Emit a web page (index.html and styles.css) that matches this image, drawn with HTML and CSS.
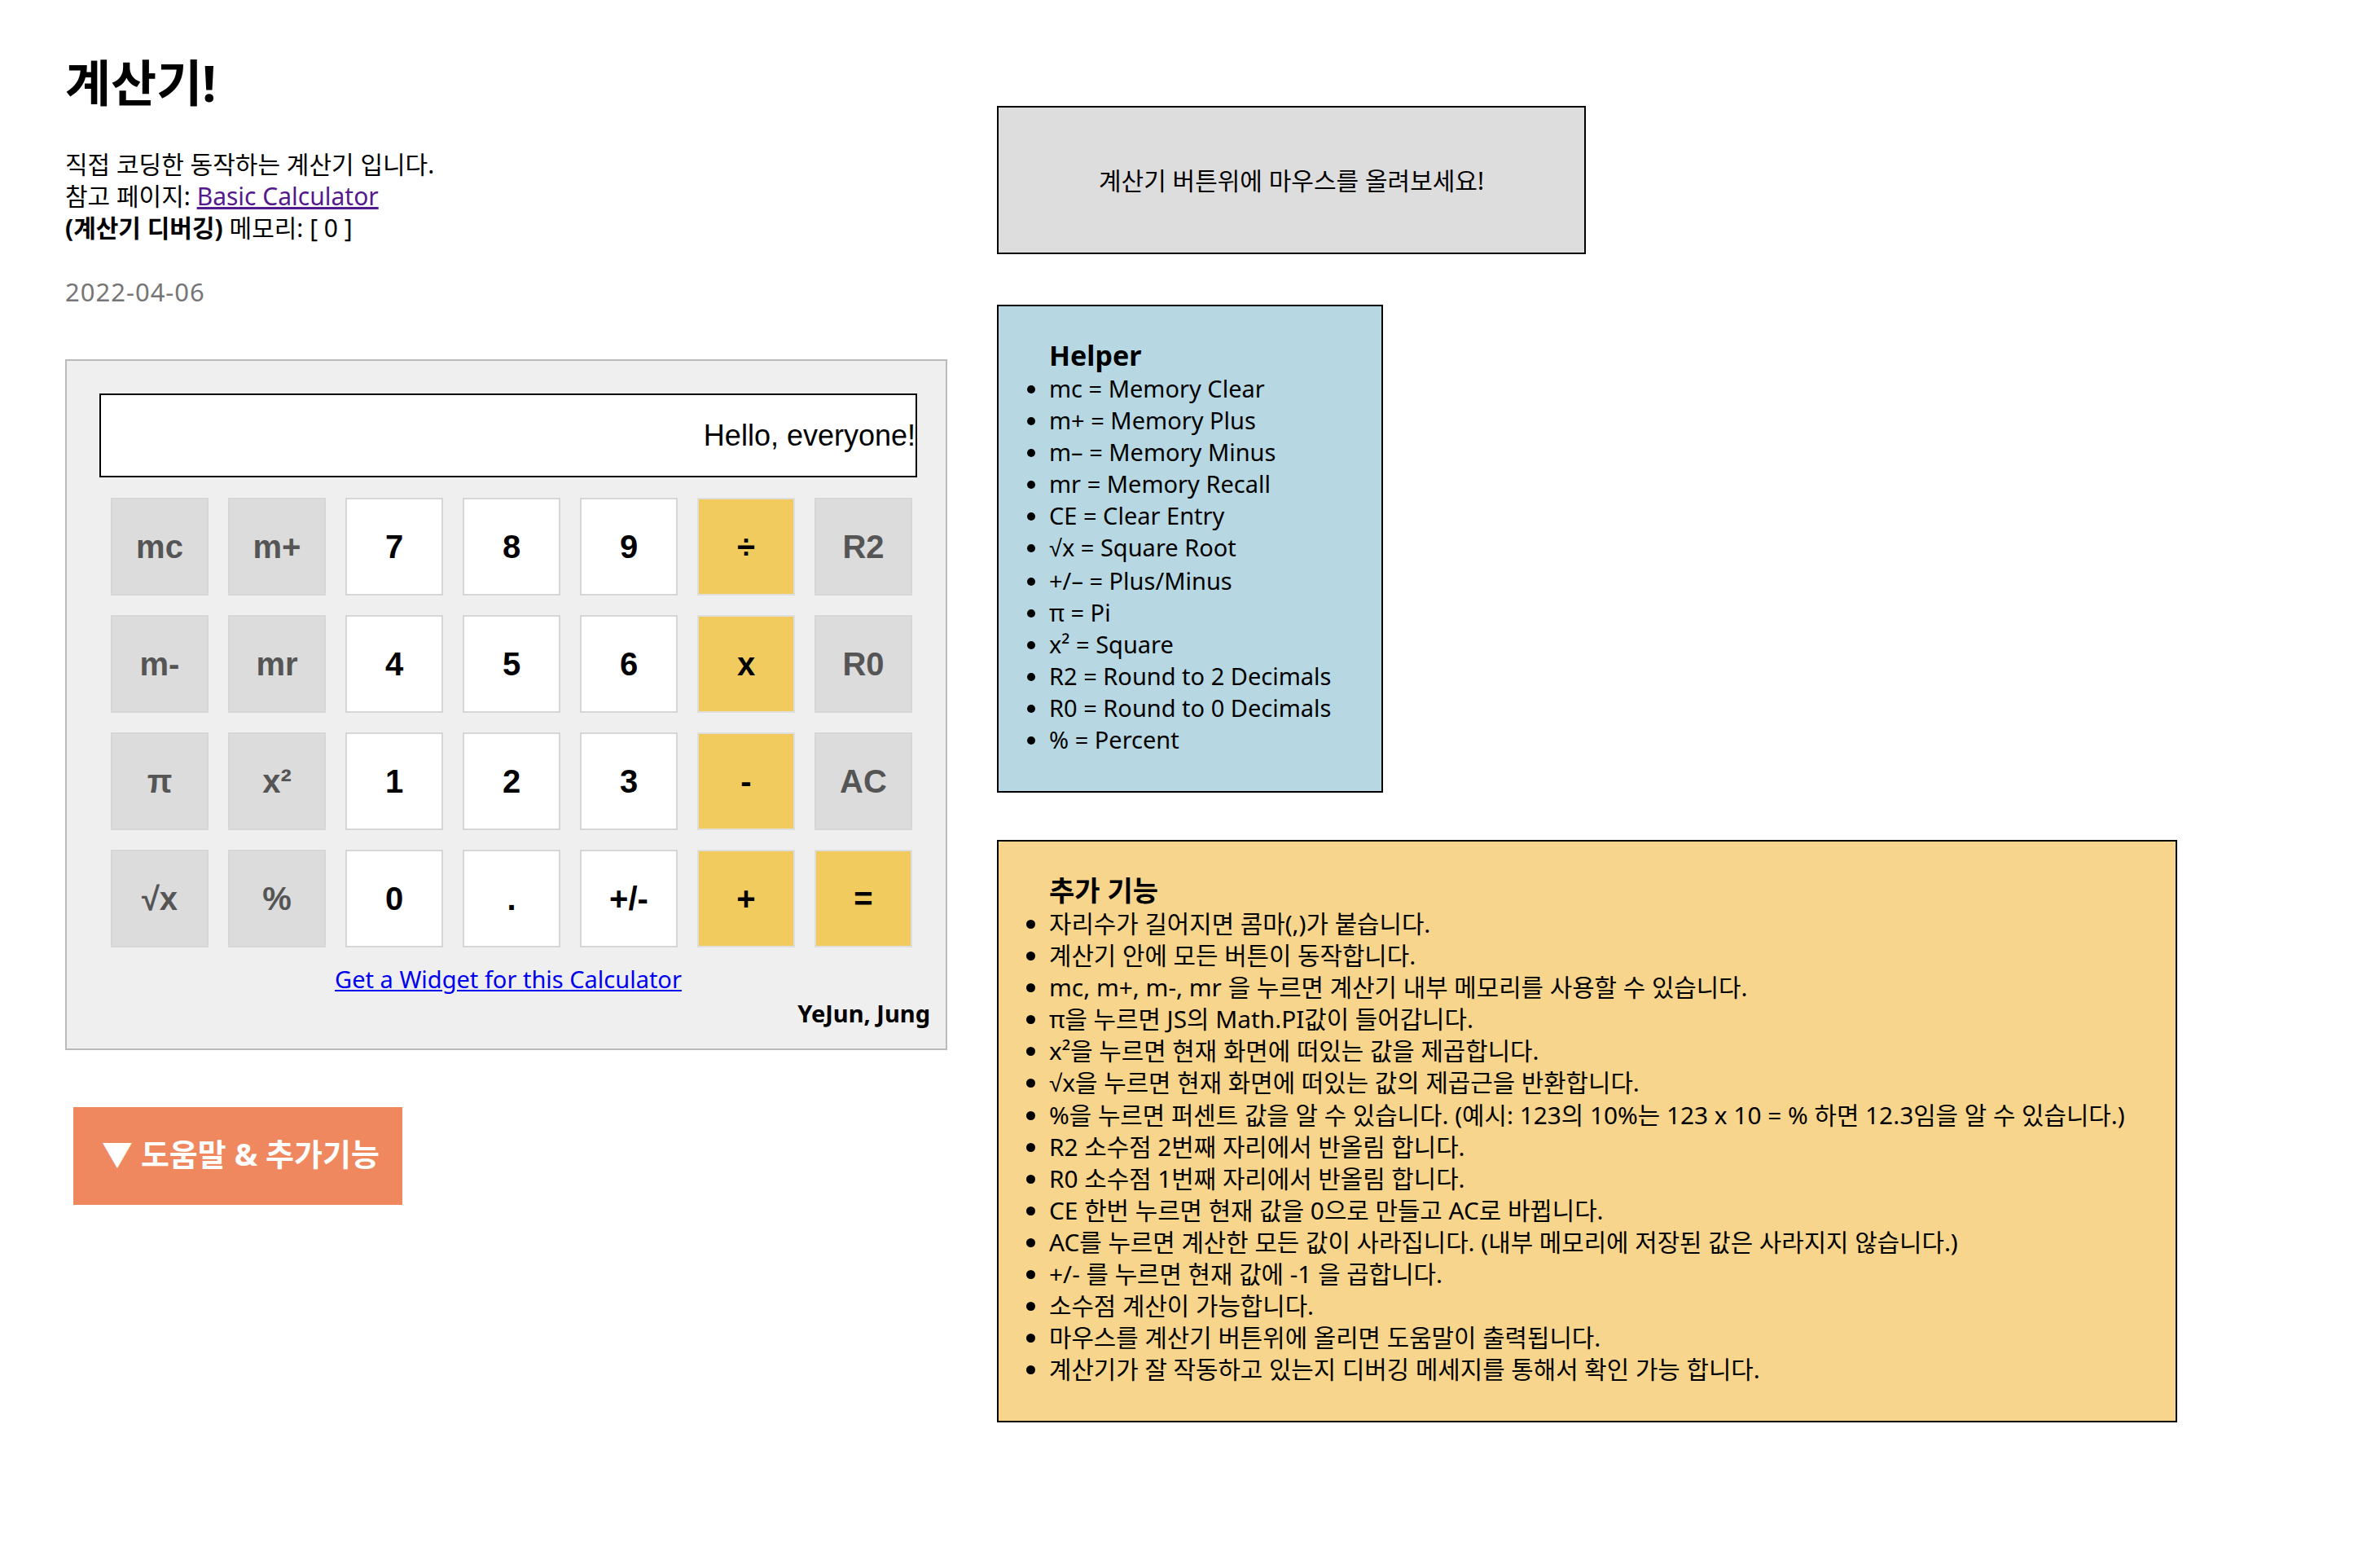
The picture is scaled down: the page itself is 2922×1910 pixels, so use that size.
FILE: index.html
```html
<!DOCTYPE html>
<html lang="ko">
<head>
<meta charset="utf-8">
<title>계산기!</title>
<link rel="stylesheet" href="styles.css">
</head>
<body>
<div class="page">
  <div class="left">
    <h1 class="title">계산기!</h1>
    <div class="intro">
      <p>직접 코딩한 동작하는 계산기 입니다.</p>
      <p>참고 페이지: <a class="ref-link" href="#">Basic Calculator</a></p>
      <p><b>(계산기 디버깅)</b> 메모리: [ 0 ]</p>
    </div>
    <p class="date">2022-04-06</p>
    <div class="calc">
      <div class="calc-main">
        <div class="display">Hello, everyone!</div>
        <div class="keys">
          <button class="key fn">mc</button>
          <button class="key fn">m+</button>
          <button class="key num">7</button>
          <button class="key num">8</button>
          <button class="key num">9</button>
          <button class="key op">÷</button>
          <button class="key fn">R2</button>

          <button class="key fn">m-</button>
          <button class="key fn">mr</button>
          <button class="key num">4</button>
          <button class="key num">5</button>
          <button class="key num">6</button>
          <button class="key op">x</button>
          <button class="key fn">R0</button>

          <button class="key fn">π</button>
          <button class="key fn">x²</button>
          <button class="key num">1</button>
          <button class="key num">2</button>
          <button class="key num">3</button>
          <button class="key op">-</button>
          <button class="key fn">AC</button>

          <button class="key fn">√x</button>
          <button class="key fn">%</button>
          <button class="key num">0</button>
          <button class="key num">.</button>
          <button class="key num">+/-</button>
          <button class="key op">+</button>
          <button class="key op">=</button>
        </div>
        <div class="widget-row"><a class="widget" href="#">Get a Widget for this Calculator</a></div>
      </div>
      <div class="author">YeJun, Jung</div>
    </div>
    <button class="toggle">▼ 도움말 &amp; 추가기능</button>
  </div>
  <div class="right">
    <div class="hint">계산기 버튼위에 마우스를 올려보세요!</div>
    <div class="panel helper">
      <h3 class="panel-title">Helper</h3>
      <ul class="panel-list">
        <li>mc = Memory Clear</li>
        <li>m+ = Memory Plus</li>
        <li>m– = Memory Minus</li>
        <li>mr = Memory Recall</li>
        <li>CE = Clear Entry</li>
        <li><span class="sym">√</span>x = Square Root</li>
        <li>+/– = Plus/Minus</li>
        <li>π = Pi</li>
        <li>x² = Square</li>
        <li>R2 = Round to 2 Decimals</li>
        <li>R0 = Round to 0 Decimals</li>
        <li>% = Percent</li>
      </ul>
    </div>
    <div class="panel extra">
      <h3 class="panel-title">추가 기능</h3>
      <ul class="panel-list">
        <li>자리수가 길어지면 콤마(,)가 붙습니다.</li>
        <li>계산기 안에 모든 버튼이 동작합니다.</li>
        <li>mc, m+, m-, mr 을 누르면 계산기 내부 메모리를 사용할 수 있습니다.</li>
        <li>π을 누르면 JS의 Math.PI값이 들어갑니다.</li>
        <li>x²을 누르면 현재 화면에 떠있는 값을 제곱합니다.</li>
        <li><span class="sym">√</span>x을 누르면 현재 화면에 떠있는 값의 제곱근을 반환합니다.</li>
        <li>%을 누르면 퍼센트 값을 알 수 있습니다. (예시: 123의 10%는 123 x 10 = % 하면 12.3임을 알 수 있습니다.)</li>
        <li>R2 소수점 2번째 자리에서 반올림 합니다.</li>
        <li>R0 소수점 1번째 자리에서 반올림 합니다.</li>
        <li>CE 한번 누르면 현재 값을 0으로 만들고 AC로 바뀝니다.</li>
        <li>AC를 누르면 계산한 모든 값이 사라집니다. (내부 메모리에 저장된 값은 사라지지 않습니다.)</li>
        <li>+/- 를 누르면 현재 값에 -1 을 곱합니다.</li>
        <li>소수점 계산이 가능합니다.</li>
        <li>마우스를 계산기 버튼위에 올리면 도움말이 출력됩니다.</li>
        <li>계산기가 잘 작동하고 있는지 디버깅 메세지를 통해서 확인 가능 합니다.</li>
      </ul>
    </div>
  </div>
</div>
</body>
</html>
```

FILE: styles.css
```css
html, body {
  margin: 0;
  padding: 0;
  background: #ffffff;
}

body {
  font-family: "Noto Sans", "Noto Sans CJK KR", sans-serif;
  font-size: 30px;
  line-height: 39px;
  color: #000000;
}

.page {
  display: flex;
  align-items: flex-start;
  gap: 61px;
  padding-left: 80px;
}

.left {
  width: 1083px;
  flex: none;
}

.title {
  margin: 62px 0 0;
  font-size: 61px;
  line-height: 80px;
  font-weight: 700;
}

.intro {
  margin-top: 40px;
}

.intro p {
  margin: 0;
}

.ref-link {
  color: #551a8b;
}

.date {
  margin: 40px 0 0;
  color: #767676;
  font-size: 31px;
  letter-spacing: 1px;
}

.calc {
  margin-top: 63px;
  box-sizing: border-box;
  width: 1083px;
  background: #efefef;
  border: 2px solid #bbbbbb;
  padding: 40px 19px 24px 40px;
}

.calc-main {
  width: 1004px;
}

.display {
  box-sizing: border-box;
  height: 103px;
  border: 2px solid #000000;
  background: #ffffff;
  font-family: "Liberation Sans", Arial, sans-serif;
  font-size: 36px;
  line-height: 99px;
  text-align: right;
  white-space: nowrap;
}

.keys {
  margin-top: 25px;
  padding-left: 14px;
  display: grid;
  grid-template-columns: repeat(7, 120px);
  grid-auto-rows: 120px;
  gap: 24px;
}

.key {
  box-sizing: border-box;
  margin: 0;
  padding: 0;
  border: 2px solid #d6d6d6;
  font-family: "Liberation Sans", Arial, sans-serif;
  font-weight: 700;
  font-size: 40px;
  line-height: 1;
  color: #000000;
  cursor: pointer;
}

.key.fn {
  background: #dcdcdc;
  color: #555555;
}

.key.num {
  background: #ffffff;
}

.key.op {
  background: #f2cb5f;
  border-color: #dedede;
}

.widget-row {
  margin-top: 19px;
  text-align: center;
  font-size: 29px;
}

.widget {
  color: #0000ee;
}

.author {
  margin-top: 3px;
  text-align: right;
  font-weight: 700;
  font-size: 29px;
}

.toggle {
  display: block;
  margin: 70px 0 0 10px;
  box-sizing: border-box;
  width: 404px;
  height: 120px;
  padding: 0 0 10px 35px;
  border: none;
  background: #ef875f;
  color: #ffffff;
  font-family: "Noto Sans", "Noto Sans CJK KR", sans-serif;
  font-size: 38px;
  font-weight: 700;
  text-align: left;
  cursor: pointer;
}

.right {
  padding-top: 130px;
}

.hint {
  box-sizing: border-box;
  width: 723px;
  height: 182px;
  border: 2px solid #000000;
  background: #dddddd;
  display: flex;
  align-items: center;
  justify-content: center;
}

.panel {
  width: fit-content;
  border: 2px solid #000000;
  padding: 39px 62px 44px;
}

.helper {
  margin-top: 62px;
  background: #b7d8e3;
}

.helper .panel-list {
  font-size: 29px;
}

.extra {
  margin-top: 58px;
  background: #f8d58c;
}

.extra .panel-list {
  font-size: 29.8px;
}

.panel-title {
  margin: 0;
  font-size: 34px;
  line-height: 42px;
  font-weight: 700;
}

.panel-list {
  margin: 0;
  padding: 0;
  list-style: disc outside;
}

.sym {
  font-family: "Liberation Sans", Arial, sans-serif;
}
```
